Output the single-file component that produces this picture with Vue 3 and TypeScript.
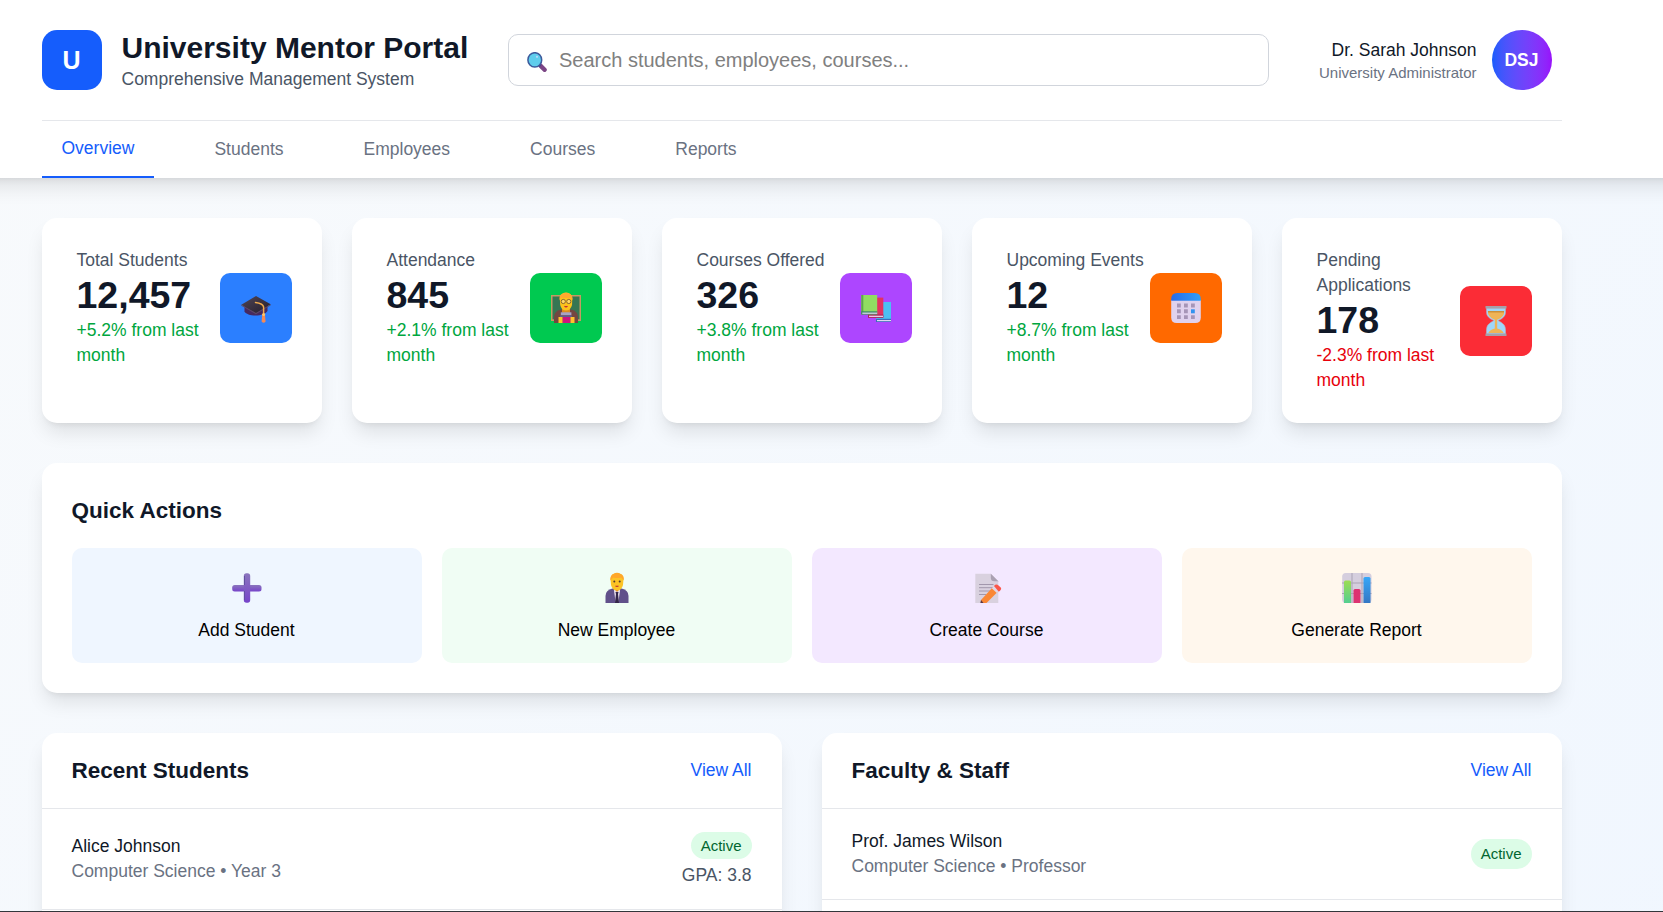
<script setup lang="ts">
interface Stat {
  label: string
  value: string
  change: string
  tone: 'up' | 'down'
  icon: 'cap' | 'teacher' | 'books' | 'calendar' | 'hourglass'
}

interface Action {
  label: string
  icon: 'plus' | 'employee' | 'memo' | 'chart'
}

interface Person {
  name: string
  detail: string
  status: string
  gpa?: string
}

interface Panel {
  title: string
  people: Person[]
}

const tabs: string[] = ['Overview', 'Students', 'Employees', 'Courses', 'Reports']

const stats: Stat[] = [
  { label: 'Total Students', value: '12,457', change: '+5.2% from last month', tone: 'up', icon: 'cap' },
  { label: 'Attendance', value: '845', change: '+2.1% from last month', tone: 'up', icon: 'teacher' },
  { label: 'Courses Offered', value: '326', change: '+3.8% from last month', tone: 'up', icon: 'books' },
  { label: 'Upcoming Events', value: '12', change: '+8.7% from last month', tone: 'up', icon: 'calendar' },
  { label: 'Pending Applications', value: '178', change: '-2.3% from last month', tone: 'down', icon: 'hourglass' },
]

const actions: Action[] = [
  { label: 'Add Student', icon: 'plus' },
  { label: 'New Employee', icon: 'employee' },
  { label: 'Create Course', icon: 'memo' },
  { label: 'Generate Report', icon: 'chart' },
]

const panels: Panel[] = [
  {
    title: 'Recent Students',
    people: [{ name: 'Alice Johnson', detail: 'Computer Science • Year 3', status: 'Active', gpa: 'GPA: 3.8' }],
  },
  {
    title: 'Faculty & Staff',
    people: [{ name: 'Prof. James Wilson', detail: 'Computer Science • Professor', status: 'Active' }],
  },
]
</script>

<template>
  <div class="page">
    <header class="header">
      <div class="container">
        <div class="topbar">
          <div class="brand">
            <div class="logo">U</div>
            <div>
              <h1 class="brand-title">University Mentor Portal</h1>
              <p class="brand-sub">Comprehensive Management System</p>
            </div>
          </div>
          <label class="search">
            <svg class="search-icon" viewBox="0 0 20 20" aria-hidden="true">
              <path d="M13.4 13.6 17.6 17.8" stroke="#7b4585" stroke-width="4.4" stroke-linecap="round" />
              <path d="M11.6 12.2 13.600 14.2" stroke="#4b3f86" stroke-width="2.4" />
              <ellipse cx="7.800" cy="7.900" rx="6.900" ry="7.200" fill="#5fcdec" stroke="#3c5a9c" stroke-width="1.500" />
              <circle cx="10" cy="4.8" r="1.1" fill="#b9d9fb" />
            </svg>
            <input class="search-input" type="text" placeholder="Search students, employees, courses..." />
          </label>
          <div class="user">
            <div class="user-text">
              <p class="user-name">Dr. Sarah Johnson</p>
              <p class="user-role">University Administrator</p>
            </div>
            <div class="avatar">DSJ</div>
          </div>
        </div>
        <nav class="tabs">
          <a v-for="(tab, i) in tabs" :key="tab" class="tab" :class="{ active: i === 0 }">{{ tab }}</a>
        </nav>
      </div>
    </header>

    <main class="container main">
      <section class="stats">
        <article v-for="stat in stats" :key="stat.label" class="card stat">
          <div class="stat-body">
            <div class="stat-text">
              <p class="stat-label">{{ stat.label }}</p>
              <p class="stat-value">{{ stat.value }}</p>
              <p class="stat-change" :class="stat.tone">{{ stat.change }}</p>
            </div>
            <div class="stat-icon" :class="stat.icon">
              <svg v-if="stat.icon === 'cap'" class="emoji" viewBox="0 0 30 30" aria-hidden="true">
                <defs>
                  <linearGradient id="cap-board" x1="0" y1="0" x2="1" y2="1">
                    <stop offset="0" stop-color="#514655" />
                    <stop offset="1" stop-color="#241d2c" />
                  </linearGradient>
                </defs>
                <path d="M3.5 13v5.5C5 21 9 22.500 14.500 22.500S24.500 21 26.500 18V13z" fill="#46295f" />
                <path d="M15 3 29.700 11.200 15 20 .3 11.800z" fill="url(#cap-board)" />
                <path d="M.3 11.800 15 20l14.700-8.800v1L15 21.300.3 12.800z" fill="#5c4a66" />
                <path d="M14.500 9.500Q22 10.500 22.600 14v7" fill="none" stroke="#f0ab4e" stroke-width="1.500" stroke-linecap="round" />
                <path d="M21.400 21h2.400l.8 7.500q-2 2.500-4 0z" fill="#f58a55" />
                <circle cx="22.600" cy="21.500" r="1.500" fill="#ffc565" />
              </svg>
              <svg v-else-if="stat.icon === 'teacher'" class="emoji" viewBox="0 0 30 30" aria-hidden="true">
                <path d="M0 2h30v26H0z" fill="#c49a63" />
                <path d="M1.500 3.500h27v22.800h-27z" fill="#367653" />
                <path d="M3 30v-6q0-6 7-7.500h10q7 1.500 7 7.500v6z" fill="#744641" />
                <path d="M11 15h8v4.500l-4 2-4-2z" fill="#dd8b20" />
                <path d="M8.800 6Q9-.5 15-.5T21.300 6l-.3 6q-1.500 5.500-6 5.500T9.200 12z" fill="#fcc21b" />
                <path d="M8.500 7Q8 2 11 1q4-2.500 8 0 3 1.500 2.500 6l-2-2.500q-4 1-9 0z" fill="#ffa92e" />
                <circle cx="12.300" cy="8.500" r="2.100" fill="#ffd966" stroke="#6f5130" stroke-width=".8" />
                <circle cx="17.800" cy="8.500" r="2.100" fill="#ffd966" stroke="#6f5130" stroke-width=".8" />
                <path d="M13.500 13.300q1.500 1 3 0" fill="none" stroke="#c02435" stroke-width="1.200" />
                <path d="M9.800 19.300h10.600v3H9.800z" fill="#a7a3c6" />
                <path d="M9 22.500h12V24H9z" fill="#5e5e8e" />
                <path d="M11.500 24h8v6h-8z" fill="#cc147e" />
                <path d="M7.500 24h4v6h-4zM19.500 24h4v6h-4z" fill="#ffc32d" />
              </svg>
              <svg v-else-if="stat.icon === 'books'" class="emoji" viewBox="0 0 30 30" aria-hidden="true">
                <path d="M15 9h15v20H15z" fill="#4bbff3" />
                <path d="M15 25.800h15v3.200H15z" fill="#3b6db9" />
                <path d="M16 27h14v1.200H16z" fill="#e0d8f3" />
                <path d="M7 4.600h15.300v20H7z" fill="#e3315f" />
                <path d="M7 21.500h15.300v3.200H7z" fill="#a92358" />
                <path d="M8 22.700h14v1.200H8z" fill="#eee1f5" />
                <path d="M.3 2h15.900v19.300H.3z" fill="#91dc62" />
                <path d="M.3 2h2v19.300h-2z" fill="#5ea54e" />
                <path d="M.3 18.300h15.900v3.200H.3z" fill="#39876a" />
                <path d="M1.300 19.600h14.900v1.200H1.300z" fill="#e4dcf0" />
              </svg>
              <svg v-else-if="stat.icon === 'calendar'" class="emoji" viewBox="0 0 30 30" aria-hidden="true">
                <defs>
                  <linearGradient id="calendar-top">
                    <stop offset="0" stop-color="#286be8" />
                    <stop offset="1" stop-color="#329ff7" />
                  </linearGradient>
                </defs>
                <path d="M.2 7h29.600v17.500q0 5.500-5.500 5.500H5.700Q.2 30 .2 24.500z" fill="#e0d2ee" />
                <path d="M.2 7.800V6q0-6 6-6h17.600q6 0 6 6v1.800z" fill="url(#calendar-top)" />
                <path
                  d="M6 10.500h3.800v4H6zm7 0h3.800v4H13zm7 0h3.800v4H20zM6 16.300h3.800v4H6zm7 0h3.800v4H13zM6 22.200h3.800V26H6zm7 0h3.800V26H13zm7 0h3.800V26H20z"
                  fill="#a695b7"
                />
                <path d="M20 16.300h3.800v4H20z" fill="#3293ef" />
              </svg>
              <svg v-else class="emoji" viewBox="0 0 30 30" aria-hidden="true">
                <path d="M5.500 2h19v4.500q0 5-7.500 8 7.500 3.500 7.500 9V28h-19v-4.500q0-5.500 7.500-9-7.500-3-7.500-8z" fill="#9fd6fa" stroke="#b8b1c0" stroke-width=".6" />
                <path d="M6.800 5h16.400q.5 6-7 8.700v8.800q5 1 6.500 4.500H7.300q1.500-3.500 6.500-4.500v-8.800Q6.500 11 6.800 5z" fill="#efb457" />
                <path d="M7 5h16v1.500H7z" fill="#cc9038" />
                <path d="M4.500 0h21v2.500h-21zM4.500 27.500h21V30h-21z" fill="#a6a0a9" />
              </svg>
            </div>
          </div>
        </article>
      </section>

      <section class="card quick">
        <h2 class="section-title">Quick Actions</h2>
        <div class="actions">
          <button v-for="action in actions" :key="action.label" class="action" :class="action.icon" type="button">
            <span class="action-icon">
              <svg v-if="action.icon === 'plus'" class="emoji" viewBox="0 0 30 30" aria-hidden="true">
                <defs>
                  <linearGradient id="plus-fill" x1="0" y1="0" x2="0" y2="1">
                    <stop offset="0" stop-color="#8a75bd" />
                    <stop offset="1" stop-color="#7643ca" />
                  </linearGradient>
                </defs>
                <rect x=".2" y="12" width="29.300" height="6.500" rx="2.500" fill="url(#plus-fill)" />
                <rect x="11.800" y=".3" width="6.400" height="29.500" rx="2.700" fill="url(#plus-fill)" />
                <path d="M12.500 3v9M12.500 18v9" stroke="#60509f" stroke-width="1" />
              </svg>
              <svg v-else-if="action.icon === 'employee'" class="emoji" viewBox="0 0 30 30" aria-hidden="true">
                <path d="M3.500 30v-7q0-6 7-7.500h9q7 1.500 7 7.500v7z" fill="#61518a" />
                <path d="M12 14h6v4l-1.800 12h-2.400L12 18z" fill="#e7ddec" />
                <path d="M11.500 15h7l-3.500 4z" fill="#dc8420" />
                <path d="m13.500 19h3l-.5 2 1 9h-4l1-9z" fill="#34264a" />
                <path d="M8.500 6Q9 0 15 0t6.500 6l-.5 6q-1.500 5.500-6 5.500t-6-5.500z" fill="#fcc326" />
                <path d="M8.300 7.500Q8 2 11.500 1q3.500-2.500 7 0 4 1 3.200 6.500l-2.500-3q-4 1-8 0z" fill="#ffa72a" />
                <circle cx="12.300" cy="8.500" r="1" fill="#503b31" />
                <circle cx="17.700" cy="8.500" r="1" fill="#503b31" />
                <path d="M13.500 13q1.500.8 3 0" fill="none" stroke="#bd2d30" stroke-width="1.200" />
              </svg>
              <svg v-else-if="action.icon === 'memo'" class="emoji" viewBox="0 0 30 30" aria-hidden="true">
                <path d="M3.300.8h15.500l7.500 7.500V30h-23z" fill="#d9d1df" />
                <path d="M18.800.8v4q0 3.500 3.500 3.500h4z" fill="#aaa0b2" />
                <path d="M7 11.500h14.500M7 14.700h14.500M7 18h12M7 21.500h7" stroke="#a297ac" stroke-width="1" />
                <path d="m20.500 14.500 5 4.500L14.500 30H9v-3z" fill="#fa8735" />
                <path d="m19.800 15.300 2.200-2.300 5 4.500-2.200 2.500z" fill="#e1d7e6" />
                <path d="M22 13q2.200-2.500 4.500-.5l2 1.800q1.500 1.500-.5 3.500l-1.200 1z" fill="#fa5649" />
                <path d="m9 27 2.500 3H8.300z" fill="#5c3740" />
              </svg>
              <svg v-else class="emoji" viewBox="0 0 30 30" aria-hidden="true">
                <defs>
                  <linearGradient id="bar-green" x1="0" y1="0" x2="0" y2="1">
                    <stop offset="0" stop-color="#9ddd52" />
                    <stop offset="1" stop-color="#54ce91" />
                  </linearGradient>
                  <linearGradient id="bar-blue" x1="0" y1="0" x2="0" y2="1">
                    <stop offset="0" stop-color="#37a7f8" />
                    <stop offset="1" stop-color="#3477c4" />
                  </linearGradient>
                </defs>
                <rect x=".2" y="0" width="29.300" height="30" rx="3.500" fill="#d5cede" />
                <path d="M10 0v30M20 0v30M0 10h29.500M0 20.500h29.500" stroke="#aaa3b4" stroke-width="1" />
                <path d="M2 30V9q0-1.500 1.500-1.500h4Q9 7.500 9 9v21z" fill="url(#bar-green)" />
                <path d="M11.500 30V17.500q0-1.500 1.500-1.500h4q1.500 0 1.500 1.500V30z" fill="#dd3371" />
                <path d="M21.500 30V5.500Q21.500 4 23 4h4q1.500 0 1.500 1.500V30z" fill="url(#bar-blue)" />
              </svg>
            </span>
            <span class="action-label">{{ action.label }}</span>
          </button>
        </div>
      </section>

      <section class="panels">
        <article v-for="panel in panels" :key="panel.title" class="card panel">
          <div class="panel-head">
            <h2 class="section-title">{{ panel.title }}</h2>
            <a class="view-all">View All</a>
          </div>
          <div v-for="person in panel.people" :key="person.name" class="row" :class="{ graded: person.gpa }">
            <div>
              <p class="person-name">{{ person.name }}</p>
              <p class="person-detail">{{ person.detail }}</p>
            </div>
            <div class="row-side">
              <span class="badge">{{ person.status }}</span>
              <p v-if="person.gpa" class="gpa">{{ person.gpa }}</p>
            </div>
          </div>
        </article>
      </section>
    </main>
  </div>
</template>

<style>
body {
  margin: 0;
  overflow: hidden;
}
</style>

<style scoped>
.page {
  box-sizing: border-box;
  height: 912px;
  overflow: hidden;
  border-bottom: 1px solid #33363b;
  background: linear-gradient(to bottom right, #f8fafc, #eff6ff) 0 0 / 100% 1500px no-repeat;
  font-family: 'Liberation Sans', Arial, sans-serif;
  font-size: 17.5px;
  line-height: 25px;
  color: #101828;
}
h1,
h2,
p {
  margin: 0;
}
.container {
  width: 1520px;
  margin-left: 41.5px;
}
.header {
  position: relative;
  margin: 0 -30px;
  padding: 0 30px;
  background: #fff;
  box-shadow: 0 12.5px 18.75px -3.75px rgba(0, 0, 0, 0.1), 0 5px 7.5px -5px rgba(0, 0, 0, 0.1);
}
.topbar {
  display: flex;
  align-items: center;
  height: 120px;
}
.brand {
  display: flex;
  align-items: center;
  gap: 20px;
  width: 466px;
}
.logo {
  display: flex;
  align-items: center;
  justify-content: center;
  width: 60px;
  height: 60px;
  border-radius: 15px;
  background: #155dfc;
  color: #fff;
  font-size: 25px;
  font-weight: 700;
}
.brand-title {
  font-size: 30px;
  line-height: 39px;
  font-weight: 700;
}
.brand-sub {
  color: #4a5565;
}
.search {
  display: flex;
  align-items: center;
  gap: 12.5px;
  box-sizing: border-box;
  width: 761px;
  height: 52px;
  padding: 0 18px;
  border: 1px solid #d1d5dc;
  border-radius: 10px;
}
.search-icon {
  flex: none;
  width: 20px;
  height: 20px;
  margin-top: 3px;
}
.search-input {
  flex: 1;
  padding: 0;
  border: 0;
  outline: 0;
  background: transparent;
  font: inherit;
  font-size: 20px;
}
.search-input::placeholder {
  color: #808080;
}
.user {
  display: flex;
  align-items: center;
  gap: 15px;
  margin-left: auto;
  margin-right: 10px;
}
.user-text {
  text-align: right;
}
.user-role {
  color: #6a7282;
  font-size: 15px;
  line-height: 20px;
}
.avatar {
  display: flex;
  align-items: center;
  justify-content: center;
  width: 60px;
  height: 60px;
  border-radius: 50%;
  background: linear-gradient(to right in oklab, #155dfc, #9810fa);
  color: #fff;
  font-weight: 700;
}
.tabs {
  display: flex;
  gap: 40px;
  height: 57px;
  border-top: 1px solid #e5e7eb;
}
.tab {
  display: flex;
  align-items: center;
  padding: 0 20px;
  color: #6a7282;
}
.tab.active {
  border-bottom: 2px solid #155dfc;
  color: #155dfc;
}
.main {
  display: flex;
  flex-direction: column;
  gap: 40px;
  padding-top: 40px;
}
.card {
  border-radius: 15px;
  background: #fff;
  box-shadow: 0 12.5px 18.75px -3.75px rgba(0, 0, 0, 0.1), 0 5px 7.5px -5px rgba(0, 0, 0, 0.1);
}
.stats {
  display: grid;
  grid-template-columns: repeat(5, 1fr);
  gap: 30px;
}
.stat {
  padding: 30px 30px 30px 35px;
}
.stat-body {
  display: flex;
  align-items: center;
  justify-content: space-between;
}
.stat-text {
  width: 143px;
}
.stat-label {
  margin-right: -10px;
  color: #4a5565;
}
.stat:last-child .stat-label {
  margin-right: 0;
}
.stat-value {
  font-size: 37.5px;
  line-height: 45px;
  font-weight: 700;
}
.stat-change.up {
  color: #00a63e;
}
.stat-change.down {
  color: #e7000b;
}
.stat-icon {
  display: flex;
  flex: none;
  align-items: center;
  justify-content: center;
  width: 72px;
  height: 70px;
  border-radius: 10px;
}
.stat-icon.cap {
  background: #2b7fff;
}
.stat-icon.teacher {
  background: #00c950;
}
.stat-icon.books {
  background: #ad46ff;
}
.stat-icon.calendar {
  background: #ff6900;
}
.stat-icon.hourglass {
  background: #fb2c36;
}
.emoji {
  display: block;
  width: 30px;
  height: 30px;
  overflow: visible;
}
.quick {
  padding: 30px;
}
.section-title {
  font-size: 22.5px;
  line-height: 35px;
  font-weight: 700;
}
.actions {
  display: grid;
  grid-template-columns: repeat(4, 1fr);
  gap: 20px;
  margin-top: 20px;
}
.action {
  display: flex;
  flex-direction: column;
  align-items: center;
  gap: 10px;
  padding: 20px;
  border: 0;
  border-radius: 10px;
  color: #000;
  font: inherit;
}
.action.plus {
  background: #eff6ff;
}
.action.employee {
  background: #f0fdf4;
}
.action.memo {
  background: #f3e8ff;
}
.action.chart {
  background: #fff7ed;
}
.action-icon {
  display: flex;
  align-items: center;
  height: 40px;
}
.panels {
  display: grid;
  grid-template-columns: 1fr 1fr;
  gap: 40px;
}
.panel {
  height: 400px;
}
.panel-head {
  display: flex;
  align-items: center;
  justify-content: space-between;
  height: 75px;
  padding: 0 30px;
  border-bottom: 1px solid #e5e7eb;
}
.view-all {
  color: #155dfc;
}
.row {
  display: flex;
  align-items: center;
  justify-content: space-between;
  height: 90px;
  padding: 0 30px;
  border-bottom: 1px solid #e5e7eb;
}
.row.graded {
  height: 100px;
}
.person-detail {
  color: #6a7282;
}
.row-side {
  display: flex;
  flex-direction: column;
  align-items: flex-end;
}
.badge {
  padding: 5px 10px;
  border-radius: 15px;
  background: #dcfce7;
  color: #016630;
  font-size: 15px;
  line-height: 20px;
}
.graded .badge {
  margin-top: 2px;
  padding: 3.5px 10px;
}
.gpa {
  margin-top: 4px;
  color: #4a5565;
}
</style>
